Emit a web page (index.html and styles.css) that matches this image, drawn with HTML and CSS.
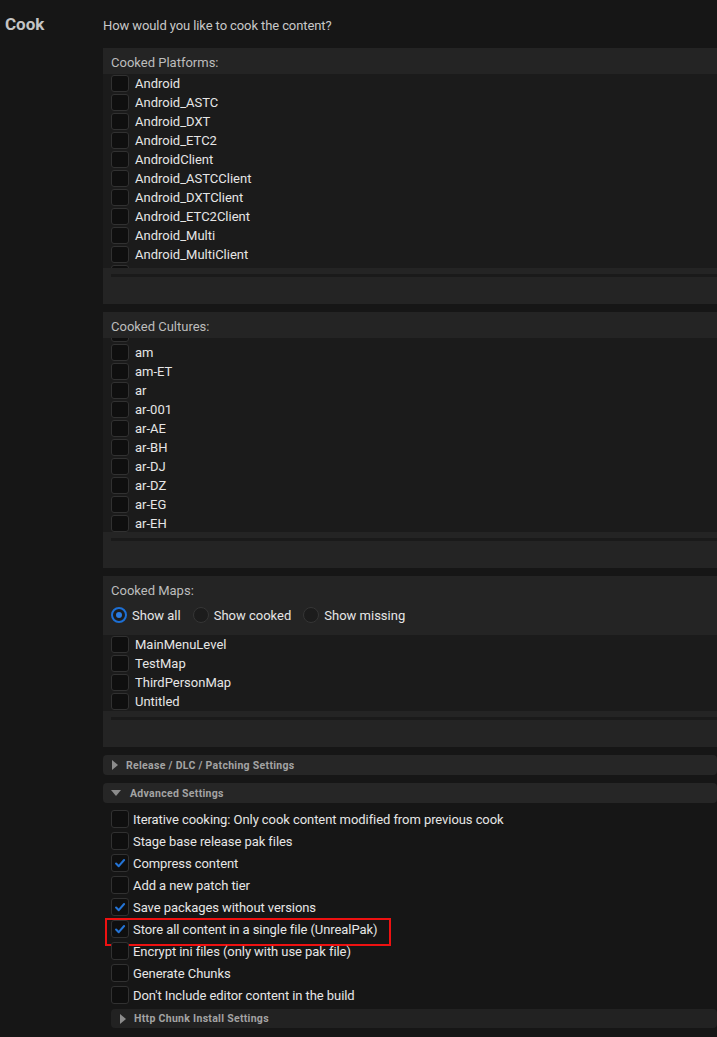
FILE: index.html
```html
<!DOCTYPE html>
<html lang="en">
<head>
<meta charset="utf-8">
<title>Cook</title>
<link rel="stylesheet" href="styles.css">
</head>
<body>
<div class="page">
  <aside class="side"><h1 class="title">Cook</h1></aside>
  <main class="main">
    <p class="intro">How would you like to cook the content?</p>

    <section class="panel">
      <div class="panel-label">Cooked Platforms:</div>
      <div class="list">
        <div class="item"><span class="cb"></span><span>Android</span></div>
        <div class="item"><span class="cb"></span><span>Android_ASTC</span></div>
        <div class="item"><span class="cb"></span><span>Android_DXT</span></div>
        <div class="item"><span class="cb"></span><span>Android_ETC2</span></div>
        <div class="item"><span class="cb"></span><span>AndroidClient</span></div>
        <div class="item"><span class="cb"></span><span>Android_ASTCClient</span></div>
        <div class="item"><span class="cb"></span><span>Android_DXTClient</span></div>
        <div class="item"><span class="cb"></span><span>Android_ETC2Client</span></div>
        <div class="item"><span class="cb"></span><span>Android_Multi</span></div>
        <div class="item"><span class="cb"></span><span>Android_MultiClient</span></div>
        <div class="item"><span class="cb"></span></div>
      </div>
      <div class="scroll"></div>
    </section>

    <section class="panel">
      <div class="panel-label">Cooked Cultures:</div>
      <div class="list">
        <div class="list-inner scrolled">
          <div class="item"><span class="cb"></span></div>
          <div class="item"><span class="cb"></span><span>am</span></div>
          <div class="item"><span class="cb"></span><span>am-ET</span></div>
          <div class="item"><span class="cb"></span><span>ar</span></div>
          <div class="item"><span class="cb"></span><span>ar-001</span></div>
          <div class="item"><span class="cb"></span><span>ar-AE</span></div>
          <div class="item"><span class="cb"></span><span>ar-BH</span></div>
          <div class="item"><span class="cb"></span><span>ar-DJ</span></div>
          <div class="item"><span class="cb"></span><span>ar-DZ</span></div>
          <div class="item"><span class="cb"></span><span>ar-EG</span></div>
          <div class="item"><span class="cb"></span><span>ar-EH</span></div>
        </div>
      </div>
      <div class="scroll"></div>
    </section>

    <section class="panel">
      <div class="panel-label">Cooked Maps:</div>
      <div class="radios">
        <label class="radio"><span class="rb on"></span><span>Show all</span></label>
        <label class="radio"><span class="rb"></span><span>Show cooked</span></label>
        <label class="radio"><span class="rb"></span><span>Show missing</span></label>
      </div>
      <div class="list maps">
        <div class="item"><span class="cb"></span><span>MainMenuLevel</span></div>
        <div class="item"><span class="cb"></span><span>TestMap</span></div>
        <div class="item"><span class="cb"></span><span>ThirdPersonMap</span></div>
        <div class="item"><span class="cb"></span><span>Untitled</span></div>
      </div>
      <div class="scroll"></div>
    </section>

    <div class="section-head"><span class="tri-right"></span><span>Release / DLC / Patching Settings</span></div>
    <div class="section-head adv"><span class="tri-down"></span><span>Advanced Settings</span></div>

    <div class="options">
      <div class="opt"><span class="cb big"></span><span>Iterative cooking: Only cook content modified from previous cook</span></div>
      <div class="opt"><span class="cb big"></span><span>Stage base release pak files</span></div>
      <div class="opt"><span class="cb big"><svg viewBox="0 0 18 18"><path d="M4.6 9.6 L7.6 12.6 L13.6 5.6"/></svg></span><span>Compress content</span></div>
      <div class="opt"><span class="cb big"></span><span>Add a new patch tier</span></div>
      <div class="opt"><span class="cb big"><svg viewBox="0 0 18 18"><path d="M4.6 9.6 L7.6 12.6 L13.6 5.6"/></svg></span><span>Save packages without versions</span></div>
      <div class="opt marked"><span class="cb big"><svg viewBox="0 0 18 18"><path d="M4.6 9.6 L7.6 12.6 L13.6 5.6"/></svg></span><span>Store all content in a single file (UnrealPak)</span></div>
      <div class="opt"><span class="cb big"></span><span>Encrypt ini files (only with use pak file)</span></div>
      <div class="opt"><span class="cb big"></span><span>Generate Chunks</span></div>
      <div class="opt"><span class="cb big"></span><span>Don't Include editor content in the build</span></div>
    </div>

    <div class="section-head sub"><span class="tri-right"></span><span>Http Chunk Install Settings</span></div>
  </main>
</div>
</body>
</html>
```

FILE: styles.css
```css
* { box-sizing: border-box; }

html, body {
  margin: 0;
  padding: 0;
  background: #161616;
  height: 100%;
  overflow: hidden;
}

body {
  font-family: Roboto, "Liberation Sans", sans-serif;
  font-size: 13px;
  color: #e6e6e6;
}

.page {
  display: grid;
  grid-template-columns: 103px 1fr;
  min-height: 1037px;
}

.side {
  padding: 14px 0 0 5px;
}

.title {
  margin: 0;
  font-size: 17px;
  line-height: 20px;
  font-weight: 700;
  color: #c4c4c4;
}

.main {
  min-width: 0;
}

.intro {
  margin: 0 0 14px;
  padding-top: 18px;
  line-height: 16px;
  color: #c8c8c8;
  letter-spacing: -0.1px;
}

.panel {
  background: #242424;
  margin-bottom: 8px;
  padding-bottom: 27px;
}

.panel-label {
  padding: 7px 8px 3px;
  line-height: 16px;
  color: #bdbdbd;
}

.list {
  height: 194px;
  overflow: hidden;
  background: #1b1b1b;
  padding-left: 8px;
}

.list.maps {
  height: 76px;
}

.list-inner.scrolled {
  margin-top: -14px;
}

.item {
  height: 19px;
  display: flex;
  align-items: center;
  gap: 6px;
  line-height: 16px;
  white-space: nowrap;
}

.cb {
  flex: none;
  width: 18px;
  height: 17px;
  background: #0f0f0f;
  border: 1px solid #313131;
  border-radius: 3px;
  display: flex;
  align-items: center;
  justify-content: center;
}

.cb.big {
  height: 18px;
}

.cb svg {
  width: 16px;
  height: 16px;
  fill: none;
  stroke: #2474d6;
  stroke-width: 2.3;
  stroke-linecap: round;
  stroke-linejoin: round;
}

.scroll {
  margin: 6px 0 0 8px;
  height: 3px;
  background: #1a1a1a;
}

.radios {
  height: 26px;
  margin-bottom: 7px;
  padding-left: 8px;
  display: flex;
  align-items: center;
  gap: 12px;
}

.radio {
  display: flex;
  align-items: center;
  gap: 5px;
  color: #e6e6e6;
  white-space: nowrap;
}

.rb {
  width: 16px;
  height: 16px;
  border-radius: 50%;
  border: 1px solid #353535;
  background: #1c1c1c;
  position: relative;
}

.rb.on {
  border: 2px solid #1d6fd4;
  background: #1c1c1c;
}

.rb.on::after {
  content: "";
  position: absolute;
  left: 50%;
  top: 50%;
  width: 6px;
  height: 6px;
  margin: -3px 0 0 -3px;
  border-radius: 50%;
  background: #2a7be0;
}

.section-head {
  height: 20px;
  border-radius: 4px;
  background: #262626;
  margin-bottom: 8px;
  display: flex;
  align-items: center;
  gap: 8px;
  padding-left: 9px;
  font-size: 10.5px;
  font-weight: 700;
  color: #a3a3a3;
  letter-spacing: 0.3px;
}

.section-head.adv {
  margin-bottom: 5px;
}

.section-head.sub {
  margin: 3px 0 0 8px;
  height: 19px;
  background: #222222;
}

.tri-right {
  width: 0;
  height: 0;
  border-top: 5px solid transparent;
  border-bottom: 5px solid transparent;
  border-left: 6px solid #8c8c8c;
}

.tri-down {
  width: 0;
  height: 0;
  border-left: 5px solid transparent;
  border-right: 5px solid transparent;
  border-top: 6px solid #8c8c8c;
  margin-left: -1px;
  margin-right: 1px;
}

.opt {
  position: relative;
  height: 22px;
  display: flex;
  align-items: center;
  gap: 4px;
  padding-left: 8px;
  white-space: nowrap;
  color: #e6e6e6;
  letter-spacing: -0.07px;
}

.opt.marked::after {
  content: "";
  position: absolute;
  left: 2px;
  top: 0;
  width: 282px;
  height: 24px;
  border: 2px solid #ee1111;
}
```
